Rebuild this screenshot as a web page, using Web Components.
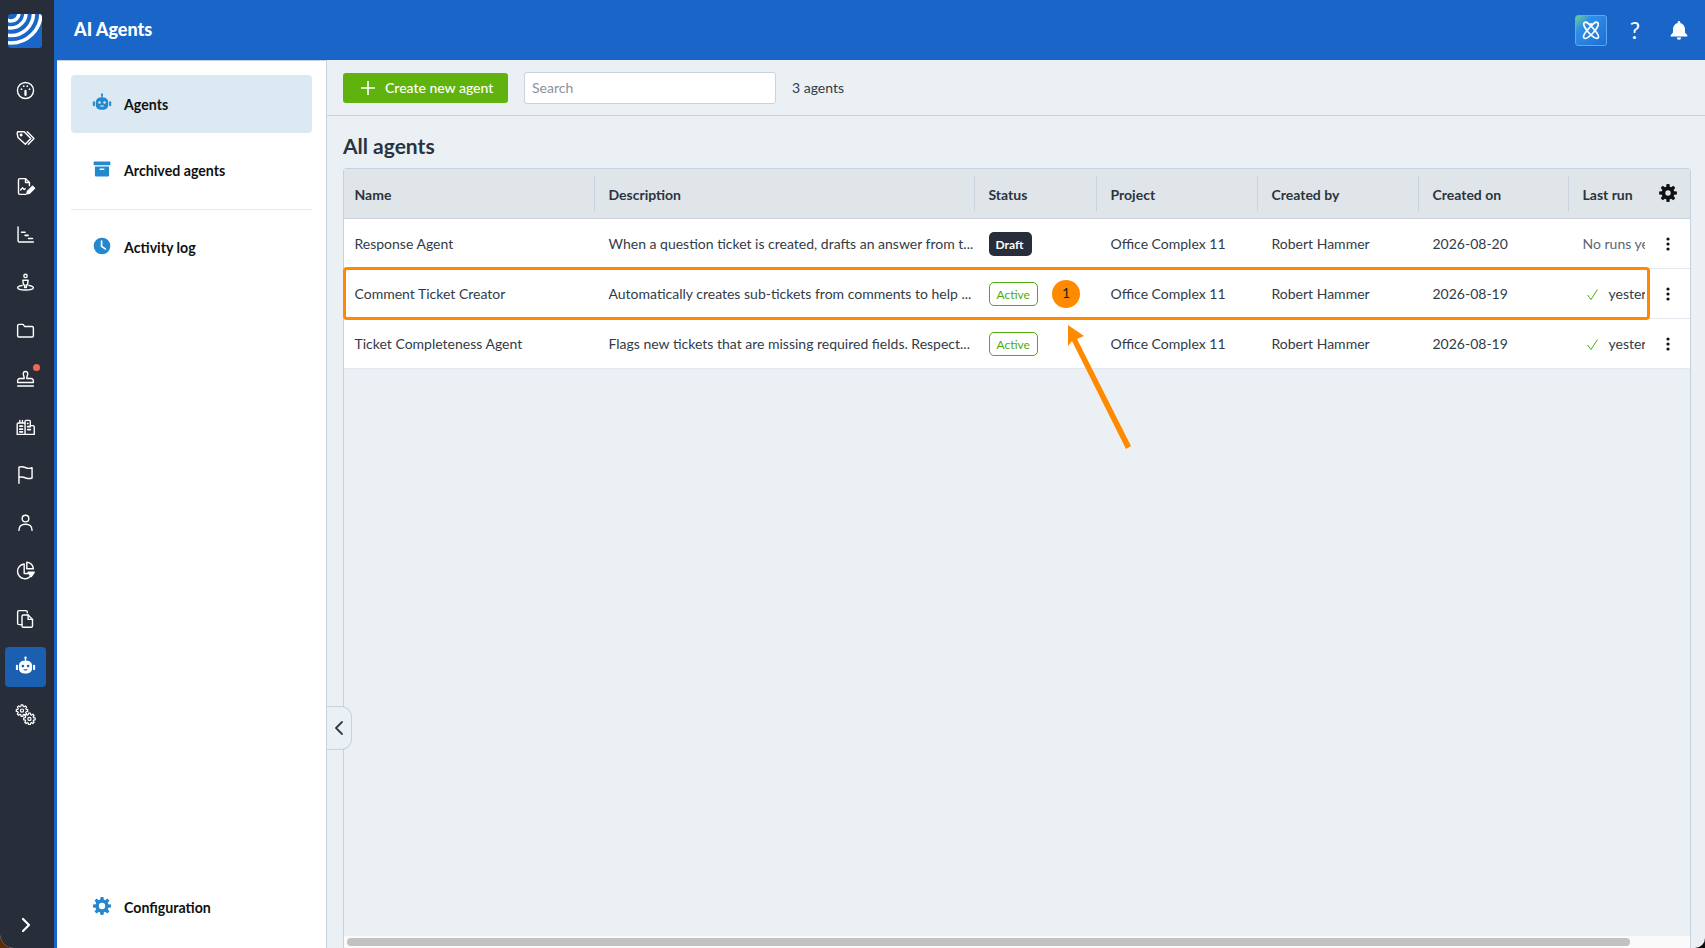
<!DOCTYPE html>
<html>
<head>
<meta charset="utf-8">
<title>AI Agents</title>
<style>
  html { height: 100%; background: linear-gradient(90deg, #5a2c08 50%, #0d0d0d 50%); }
  body { margin: 0; height: 100%; overflow: hidden; font-family: Lato, "Liberation Sans", sans-serif; }
</style>
</head>
<body>
<app-shell>
  <side-rail slot="rail">
    <rail-item icon="gauge"></rail-item>
    <rail-item icon="tags"></rail-item>
    <rail-item icon="filesign"></rail-item>
    <rail-item icon="gantt"></rail-item>
    <rail-item icon="pin"></rail-item>
    <rail-item icon="folder"></rail-item>
    <rail-item icon="stamp" dot></rail-item>
    <rail-item icon="city"></rail-item>
    <rail-item icon="flag"></rail-item>
    <rail-item icon="user"></rail-item>
    <rail-item icon="pie"></rail-item>
    <rail-item icon="docs"></rail-item>
    <rail-item icon="robot" active></rail-item>
    <rail-item icon="gears"></rail-item>
  </side-rail>
  <top-bar slot="top">AI Agents</top-bar>
  <side-nav slot="nav">
    <nav-item icon="robot" active>Agents</nav-item>
    <nav-item icon="archive">Archived agents</nav-item>
    <nav-item icon="clock" slot="after">Activity log</nav-item>
    <nav-item icon="cog" slot="bottom">Configuration</nav-item>
  </side-nav>
  <agents-page slot="page">
    <agent-row name="Response Agent" desc="When a question ticket is created, drafts an answer from t..." project="Office Complex 11" by="Robert Hammer" on="2026-08-20" run="No runs yet">
      <status-badge slot="status" kind="draft">Draft</status-badge>
    </agent-row>
    <agent-row name="Comment Ticket Creator" desc="Automatically creates sub-tickets from comments to help ..." project="Office Complex 11" by="Robert Hammer" on="2026-08-19" run="yesterday" ok>
      <status-badge slot="status" kind="active">Active</status-badge>
    </agent-row>
    <agent-row name="Ticket Completeness Agent" desc="Flags new tickets that are missing required fields. Respect..." project="Office Complex 11" by="Robert Hammer" on="2026-08-19" run="yesterday" ok>
      <status-badge slot="status" kind="active">Active</status-badge>
    </agent-row>
  </agents-page>
  <guide-callout slot="over" number="1"></guide-callout>
</app-shell>

<script>
// toothed outline for the cog icons
function gear(cx, cy, ro, ri, n) {
  const step = Math.PI * 2 / n;
  let d = '';
  for (let i = 0; i < n; i++) {
    const a = i * step - Math.PI / 2;
    const pts = [[ri, a - step * .36], [ro, a - step * .2], [ro, a + step * .2], [ri, a + step * .36]];
    pts.forEach(([r, t]) => {
      d += (d ? 'L' : 'M') + (cx + r * Math.cos(t)).toFixed(2) + ' ' + (cy + r * Math.sin(t)).toFixed(2);
    });
  }
  return d + 'Z';
}
function hole(cx, cy, r) {
  return `M${cx - r} ${cy}a${r} ${r} 0 1 0 ${r * 2} 0a${r} ${r} 0 1 0 ${-r * 2} 0Z`;
}

// stroke icons are drawn on a 24 box, white or currentColor
const ICONS = {
  gauge: `<circle cx="12" cy="12" r="9.2"/><path d="M12 12.5V17" stroke-width="2.6"/><circle cx="7.4" cy="10.5" r="1" fill="currentColor" stroke="none"/><circle cx="10" cy="7" r="1" fill="currentColor" stroke="none"/><circle cx="14" cy="7" r="1" fill="currentColor" stroke="none"/><circle cx="16.6" cy="10.5" r="1" fill="currentColor" stroke="none"/>`,
  tags: `<path d="M2.5 6.5 3 4.2h7.5l7.6 7.8-6.3 6.6L3.4 10.8z"/><circle cx="7" cy="8" r=".9" fill="currentColor"/><path d="M14 4.2l7.7 7.8-6.4 6.6"/>`,
  filesign: `<path d="M12 21H5.5A1.5 1.5 0 0 1 4 19.5v-15A1.5 1.5 0 0 1 5.500 3H12l4.500 4.500V11"/><path d="M12 3v4.500h4.500"/><path d="M6.500 16l2-2.500 2 2 1.200-1"/><path d="M13.500 20.500l.6-2.800 6-6 2.200 2.200-6 6z" fill="currentColor"/>`,
  gantt: `<path d="M3.500 3.500V19a1.500 1.500 0 0 0 1.500 1.500h16"/><path d="M7.500 9.500h4M11.500 13h3.500M15.500 16.500h4.500" stroke-width="1.800"/>`,
  pin: `<circle cx="12" cy="4.500" r="1.900"/><path d="M9 9.500h6l-.7 5.200-1.300 0v3h-2v-3l-1.300 0z"/><path d="M8 15.500c-3 .5-5 1.400-5 2.500 0 1.500 4 2.500 9 2.500s9-1 9-2.500c0-1.100-2-2-5-2.500"/>`,
  folder: `<path d="M3 6.500A1.500 1.500 0 0 1 4.500 5h4.700l2 2.500h8.300A1.500 1.500 0 0 1 21 9v9a1.500 1.500 0 0 1-1.500 1.500h-15A1.500 1.500 0 0 1 3 18z"/>`,
  stamp: `<path d="M9.500 6.500a2.500 2.500 0 1 1 5 0c0 2-1 3-1 5.500h5a2.500 2.500 0 0 1 2.500 2.500V16.500H3v-2A2.500 2.500 0 0 1 5.500 12h5c0-2.500-1-3.500-1-5.500z"/><path d="M3 20.500h18"/>`,
  city: `<path d="M2.500 21V9.500A1.500 1.500 0 0 1 4 8h6.500A1 1 0 0 1 11.500 9V21zM11.500 21V6a1 1 0 0 1 1-1h4a1 1 0 0 1 1 1v5h3a1.500 1.500 0 0 1 1.500 1.500V21zM2.500 21h19M5.500 8V5M8.500 8V5"/><path d="M5.500 11.500h3M5.500 15h3M5.500 18h3M14.500 8.500h.1M14.500 12h3M14.500 15.500h3" stroke-width="2"/>`,
  flag: `<path d="M4.500 22V3.500c3.500-1 6 0 8 .8 2 .7 4.500 1 7 0V16c-2.500 1-5 .7-7 0-2-.8-4.500-1.800-8-.8"/>`,
  user: `<circle cx="12" cy="7.500" r="3.800"/><path d="M4.500 21c0-4.500 3-7 7.500-7s7.500 2.500 7.500 7"/>`,
  pie: `<path d="M10.500 4.500a8.500 8.500 0 1 0 9 11h-9z"/><path d="M13.500 2.500a8.500 8.500 0 0 1 7.500 7.500h-7.500z"/><path d="M15 14h7l-3.500 5z" fill="currentColor"/>`,
  docs: `<path d="M14 5.500V4.500A1.500 1.500 0 0 0 12.500 3h-8A1.500 1.500 0 0 0 3 4.500v13A1.500 1.500 0 0 0 4.500 19H8"/><path d="M8 9.500A1.500 1.500 0 0 1 9.500 8H15l5 5v7.500a1.500 1.500 0 0 1-1.500 1.500h-9A1.500 1.500 0 0 1 8 20.500z"/><path d="M15 8v5h5"/>`,
  gears: `<path d="${gear(8, 7.5, 6.6, 4.9, 8)}" stroke-width="1.400"/><circle cx="8" cy="7.500" r="1.800" stroke-width="1.400"/><path d="${gear(16.500, 17, 6.6, 4.900, 8)}" stroke-width="1.400"/><circle cx="16.500" cy="17" r="1.800" stroke-width="1.400"/>`,
  // filled ones
  robot: `<g fill="currentColor" stroke="none"><rect x="11.200" y="1" width="1.600" height="5"/><circle cx="12" cy="2" r="1.300"/><rect x="4.500" y="5.500" width="15" height="14.500" rx="5.500"/><rect x="1" y="10" width="2.400" height="6" rx="1"/><rect x="20.600" y="10" width="2.400" height="6" rx="1"/></g><g class="face" stroke="none"><circle cx="9" cy="11.500" r="1.500"/><circle cx="15" cy="11.500" r="1.500"/><path d="M9.500 15h5a2.500 1.500 0 0 1-5 0z"/></g>`,
  archive: `<g fill="currentColor" stroke="none"><rect x="2" y="3" width="20" height="4.500" rx=".6"/><path d="M3.500 9h17v10.500a1.500 1.500 0 0 1-1.500 1.500H5a1.500 1.500 0 0 1-1.500-1.500z"/></g><rect x="9" y="11.500" width="6" height="1.600" rx=".8" fill="#fff" stroke="none"/>`,
  clock: `<circle cx="12" cy="12" r="10" fill="currentColor" stroke="none"/><path d="M11.500 6v6.500l4.500 3" stroke="#fff" stroke-width="2"/>`,
  cog: `<path fill="currentColor" stroke="none" fill-rule="evenodd" d="${gear(12, 12, 11, 8, 8) + hole(12, 12, 3.800)}"/>`,
  cogsolid: `<path fill="currentColor" stroke="none" fill-rule="evenodd" d="${gear(12, 12, 12, 8.600, 8) + hole(12, 12, 3.600)}"/>`
};

class AppIcon extends HTMLElement {
  connectedCallback() {
    const size = this.getAttribute('size') || 20;
    this.attachShadow({ mode: 'open' }).innerHTML = `
      <style>
        :host { display: inline-flex; width: ${size}px; height: ${size}px; flex: none; }
        svg { width: 100%; height: 100%; display: block; fill: none; stroke: currentColor; stroke-width: 1.6; stroke-linecap: round; stroke-linejoin: round; }
        .face { fill: var(--face, #fff); }
      </style>
      <svg viewBox="0 0 24 24">${ICONS[this.getAttribute('name')]}</svg>`;
  }
}
customElements.define('app-icon', AppIcon);

class AppShell extends HTMLElement {
  constructor() {
    super();
    this.attachShadow({ mode: 'open' }).innerHTML = `
      <style>
        :host { display: grid; position: relative; height: 948px; overflow: hidden; grid-template-columns: 57px 270px 1fr; grid-template-rows: 60px 1fr; background: #ebf0f5; border-radius: 0 0 10px 14px; }
        ::slotted([slot=rail]) { grid-row: 1 / 3; }
        ::slotted([slot=top]) { grid-column: 2 / 4; }
      </style>
      <slot name="rail"></slot>
      <slot name="top"></slot>
      <slot name="nav"></slot>
      <slot name="page"></slot>
      <slot name="over"></slot>`;
  }
}
customElements.define('app-shell', AppShell);

class SideRail extends HTMLElement {
  constructor() {
    super();
    this.attachShadow({ mode: 'open' }).innerHTML = `
      <style>
        :host { display: flex; flex-direction: column; background: #272e3a; border-right: 3px solid #1a65c8; padding-top: 14px; box-sizing: border-box; }
        .logo { margin: 0 0 19px 8px; width: 34px; height: 34px; display: block; }
        .more { margin-top: auto; height: 46px; display: flex; align-items: center; justify-content: center; padding-right: 2px; color: #fff; }
        .more svg { width: 10px; height: 16px; fill: none; stroke: currentColor; stroke-width: 2.2; stroke-linecap: round; stroke-linejoin: round; }
      </style>
      <svg class="logo" viewBox="0 0 34 34">
        <clipPath id="c"><rect width="34" height="34" rx="3"/></clipPath>
        <g clip-path="url(#c)">
          <rect width="34" height="34" fill="#1a65c8"/>
          <g fill="none" stroke="#fff" stroke-width="3.500">
            <circle cx="3" cy="-1" r="8"/><circle cx="3" cy="-1" r="15"/><circle cx="3" cy="-1" r="22.500"/><circle cx="3" cy="-1" r="30"/>
          </g>
        </g>
      </svg>
      <slot></slot>
      <div class="more"><svg viewBox="0 0 10 16"><path d="M2 2l6 6-6 6"/></svg></div>`;
  }
}
customElements.define('side-rail', SideRail);

class RailItem extends HTMLElement {
  connectedCallback() {
    this.attachShadow({ mode: 'open' }).innerHTML = `
      <style>
        :host { display: flex; height: 48px; align-items: center; padding-left: 5px; color: #fff; --face: #1a5fb0; }
        .box { position: relative; width: 41px; height: 40px; border-radius: 4px; display: flex; align-items: center; justify-content: center; }
        :host([active]) .box { background: #1a5fb0; }
        app-icon { margin: 0 1px 1px 0; }
        .dot { position: absolute; left: 28px; top: 5px; width: 7px; height: 7px; border-radius: 50%; background: #f2655a; }
      </style>
      <div class="box">
        <app-icon name="${this.getAttribute('icon')}" size="21"></app-icon>
        ${this.hasAttribute('dot') ? '<span class="dot"></span>' : ''}
      </div>`;
  }
}
customElements.define('rail-item', RailItem);

class TopBar extends HTMLElement {
  constructor() {
    super();
    this.attachShadow({ mode: 'open' }).innerHTML = `
      <style>
        :host { display: flex; align-items: center; background: #1a65c8; color: #fff; padding: 0 16px 0 17px; }
        h1 { margin: 0 0 2px; font: 900 18px Lato, sans-serif; flex: 1; }
        .ai { width: 32px; height: 31px; box-sizing: border-box; border: 1px solid #62a6ee; border-radius: 3px; background: linear-gradient(135deg, #6fd08c 0, #2e8fe6 28%, #1c6fd6 100%); display: flex; align-items: center; justify-content: center; margin-right: 8px; }
        .ai svg { width: 20px; height: 20px; fill: none; stroke: #fff; stroke-width: 1.700; }
        .q { width: 40px; text-align: center; font: 400 23px Lato, sans-serif; }
        .bell { width: 18px; height: 20px; margin: 0 1px 0 15px; fill: #fff; }
      </style>
      <h1><slot></slot></h1>
      <div class="ai"><svg viewBox="0 0 20 20"><path d="M3.500 2.500c3-1.500 6 3 10 7.500s5 6.500 3.500 8-5-1-8.500-4.500S1 4 3.500 2.500z"/><path d="M16.500 2.500c-3-1.500-6 3-10 7.500s-5 6.500-3.500 8 5-1 8.500-4.500S19 4 16.500 2.500z"/><circle cx="10" cy="4" r="1.100" fill="#fff" stroke="none"/></svg></div>
      <div class="q">?</div>
      <svg class="bell" viewBox="0 0 18 20"><path d="M9 1a1.300 1.300 0 0 1 1.300 1.300v.6C13 3.500 15 6 15 9v3.500l2.300 2.700c.4.500 0 1.300-.6 1.300H1.300c-.6 0-1-.8-.6-1.300L3 12.500V9c0-3 2-5.500 4.700-6.100v-.6A1.300 1.300 0 0 1 9 1z"/><path d="M6.800 17.500h4.400a2.200 2.200 0 0 1-4.400 0z"/></svg>`;
  }
}
customElements.define('top-bar', TopBar);

class SideNav extends HTMLElement {
  constructor() {
    super();
    this.attachShadow({ mode: 'open' }).innerHTML = `
      <style>
        :host { display: flex; flex-direction: column; background: #fff; border-right: 1px solid #c9d3df; border-top: 1px solid #c9d3df; padding: 14px 14px 12px; box-sizing: border-box; }
        .main { display: flex; flex-direction: column; gap: 8px; }
        hr { border: 0; border-top: 1px solid #e6e9ed; margin: 10px 0 8px; width: 100%; }
        .bottom { margin-top: auto; }
      </style>
      <div class="main"><slot></slot></div>
      <hr>
      <slot name="after"></slot>
      <div class="bottom"><slot name="bottom"></slot></div>`;
  }
}
customElements.define('side-nav', SideNav);

class NavItem extends HTMLElement {
  connectedCallback() {
    this.attachShadow({ mode: 'open' }).innerHTML = `
      <style>
        :host { display: flex; height: 58px; align-items: center; padding-left: 21px; border-radius: 4px; font: 700 14.200px Lato, sans-serif; color: #111; --face: #dbe9f2; }
        :host([active]) { background: #dbe9f2; }
        app-icon { color: #2488cf; margin: 0 12px 3px 0; }
      </style>
      <app-icon name="${this.getAttribute('icon')}" size="20"></app-icon>
      <span><slot></slot></span>`;
  }
}
customElements.define('nav-item', NavItem);

class StatusBadge extends HTMLElement {
  constructor() {
    super();
    this.attachShadow({ mode: 'open' }).innerHTML = `
      <style>
        :host { display: inline-flex; align-items: center; height: 24px; box-sizing: border-box; border-radius: 5px; padding: 1px 7px 0; font-size: 12px; }
        :host([kind=draft]) { background: #272e3a; color: #fff; font-weight: 700; width: 43px; }
        :host([kind=active]) { background: #fff; color: #52ac0c; border: 1px solid #52ac0c; width: 49px; }
      </style>
      <slot></slot>`;
  }
}
customElements.define('status-badge', StatusBadge);

class AgentRow extends HTMLElement {
  connectedCallback() {
    const a = n => this.getAttribute(n);
    const ok = this.hasAttribute('ok');
    this.attachShadow({ mode: 'open' }).innerHTML = `
      <style>
        :host { display: grid; grid-template-columns: var(--cols); height: 50px; box-sizing: border-box; align-items: center; background: #fff; border-bottom: 1px solid #e3e8ee; font-size: 14px; color: #333b46; }
        div { padding-left: 15px; white-space: nowrap; overflow: hidden; }
        .name { padding-left: 10.500px; }
        .run { color: ${ok ? '#333b46' : '#5d6670'}; margin-right: 5px; position: relative; }
        .run svg { position: absolute; left: 18px; top: 3px; width: 13px; height: 13px; fill: none; stroke: #52ac0c; stroke-width: 1; }
        .run.ok { padding-left: 41px; }
        .acts { padding: 0 4px 0 0; display: flex; justify-content: center; }
        .acts svg { width: 4px; height: 14px; fill: #111; }
      </style>
      <div class="name">${a('name')}</div>
      <div>${a('desc')}</div>
      <div style="height:24px;overflow:visible"><slot name="status"></slot></div>
      <div>${a('project')}</div>
      <div>${a('by')}</div>
      <div>${a('on')}</div>
      <div class="run ${ok ? 'ok' : ''}">${ok ? '<svg viewBox="0 0 13 13"><path d="M1.500 7l3.500 4.500L11.500 1.500"/></svg>' : ''}${a('run')}</div>
      <div class="acts"><svg viewBox="0 0 4 14"><circle cx="2" cy="2" r="1.600"/><circle cx="2" cy="7" r="1.600"/><circle cx="2" cy="12" r="1.600"/></svg></div>`;
  }
}
customElements.define('agent-row', AgentRow);

class AgentsPage extends HTMLElement {
  constructor() {
    super();
    const heads = ['Name', 'Description', 'Status', 'Project', 'Created by', 'Created on', 'Last run'];
    this.attachShadow({ mode: 'open' }).innerHTML = `
      <style>
        :host { display: flex; flex-direction: column; min-height: 0; position: relative; --cols: 249.500px 380px 122px 161px 161px 150px 82.500px 39px; font-family: Lato, sans-serif; }
        .bar { display: flex; align-items: center; height: 56px; box-sizing: border-box; padding: 1px 0 0 16px; border-bottom: 1px solid #c9d3df; font-size: 14px; color: #333b46; }
        .add { display: flex; align-items: center; width: 165px; height: 30px; box-sizing: border-box; padding: 0 0 1px 18px; background: #60b30e; color: #fff; border-radius: 3px; font-weight: 500; font-size: 14px; margin-right: 16px; }
        .add svg { width: 14px; height: 14px; stroke: #fff; stroke-width: 1.600; margin-right: 10px; }
        .search { width: 252px; height: 32px; box-sizing: border-box; background: #fff; border: 1px solid #c9d3df; border-radius: 3px; padding: 0 7px 1px; display: flex; align-items: center; color: #8b929a; margin-right: 16px; }
        .bar > span { margin-bottom: 1px; }
        h2 { margin: 0; padding: 17px 0 9px 16px; font: 700 21px/26px Lato, sans-serif; color: #2a3340; }
        .table { flex: 1; min-height: 0; margin: 0 14px 0 16px; box-sizing: border-box; border: 1px solid #c5d1de; border-bottom: 0; border-radius: 4px 4px 0 0; display: flex; flex-direction: column; }
        .head { display: grid; grid-template-columns: var(--cols); height: 50px; box-sizing: border-box; align-items: center; background: #e0e5ea; border-bottom: 1px solid #c9d3df; font-weight: 700; font-size: 14px; color: #2b3440; }
        .head span { height: 35px; display: flex; align-items: center; padding: 1px 0 0 14px; border-left: 1px solid #c9d3df; box-sizing: border-box; white-space: nowrap; overflow: hidden; }
        .head span:first-child { border-left: 0; padding-left: 10.500px; }
        .head .gear { border: 0; padding: 0 4px 1px 0; justify-content: center; overflow: visible; color: #111; }
        .scroll { margin-top: auto; height: 12px; background: #fafafa; padding: 2px 3px; box-sizing: border-box; }
        .scroll i { display: block; width: 1283px; height: 8px; border-radius: 4px; background: #c2c2c2; }
        .collapse { position: absolute; left: 0; top: 646px; width: 25px; height: 44px; box-sizing: border-box; background: #ebf0f5; border: 1px solid #c9d3df; border-left: 0; border-radius: 0 11px 11px 0; display: flex; align-items: center; justify-content: center; }
        .collapse svg { width: 10px; height: 16px; margin-right: 1px; fill: none; stroke: #333b46; stroke-width: 1.800; stroke-linecap: round; stroke-linejoin: round; }
      </style>
      <div class="bar">
        <div class="add"><svg viewBox="0 0 14 14"><path d="M7 0v14M0 7h14"/></svg>Create new agent</div>
        <div class="search">Search</div>
        <span>3 agents</span>
      </div>
      <h2>All agents</h2>
      <div class="table">
        <div class="head">
          ${heads.map(h => `<span>${h}</span>`).join('')}
          <span class="gear"><app-icon name="cogsolid" size="18"></app-icon></span>
        </div>
        <slot></slot>
        <div class="scroll"><i></i></div>
      </div>
      <div class="collapse"><svg viewBox="0 0 10 16"><path d="M8 2L2 8l6 6"/></svg></div>`;
  }
}
customElements.define('agents-page', AgentsPage);

// tutorial markup painted over the screen: box, number and arrow
class GuideCallout extends HTMLElement {
  connectedCallback() {
    this.attachShadow({ mode: 'open' }).innerHTML = `
      <style>
        :host { position: absolute; inset: 0; pointer-events: none; font-family: Lato, sans-serif; }
        .box { position: absolute; left: 343px; top: 267px; width: 1307px; height: 53px; box-sizing: border-box; border: 3px solid #ff8a00; border-radius: 4px; }
        .num { position: absolute; left: 1052px; top: 280px; width: 28px; height: 28px; box-sizing: border-box; padding-bottom: 3px; border-radius: 50%; background: #ff8a00; color: #222; font-size: 14px; display: flex; align-items: center; justify-content: center; }
        svg { position: absolute; left: 0; top: 0; width: 1705px; height: 948px; }
      </style>
      <div class="box"></div>
      <div class="num">${this.getAttribute('number')}</div>
      <svg viewBox="0 0 1705 948"><polygon fill="#ff8a00" points="1068,325 1084,336 1077,339 1131,446 1126,449 1072,341 1068,346"/></svg>`;
  }
}
customElements.define('guide-callout', GuideCallout);
</script>
</body>
</html>
